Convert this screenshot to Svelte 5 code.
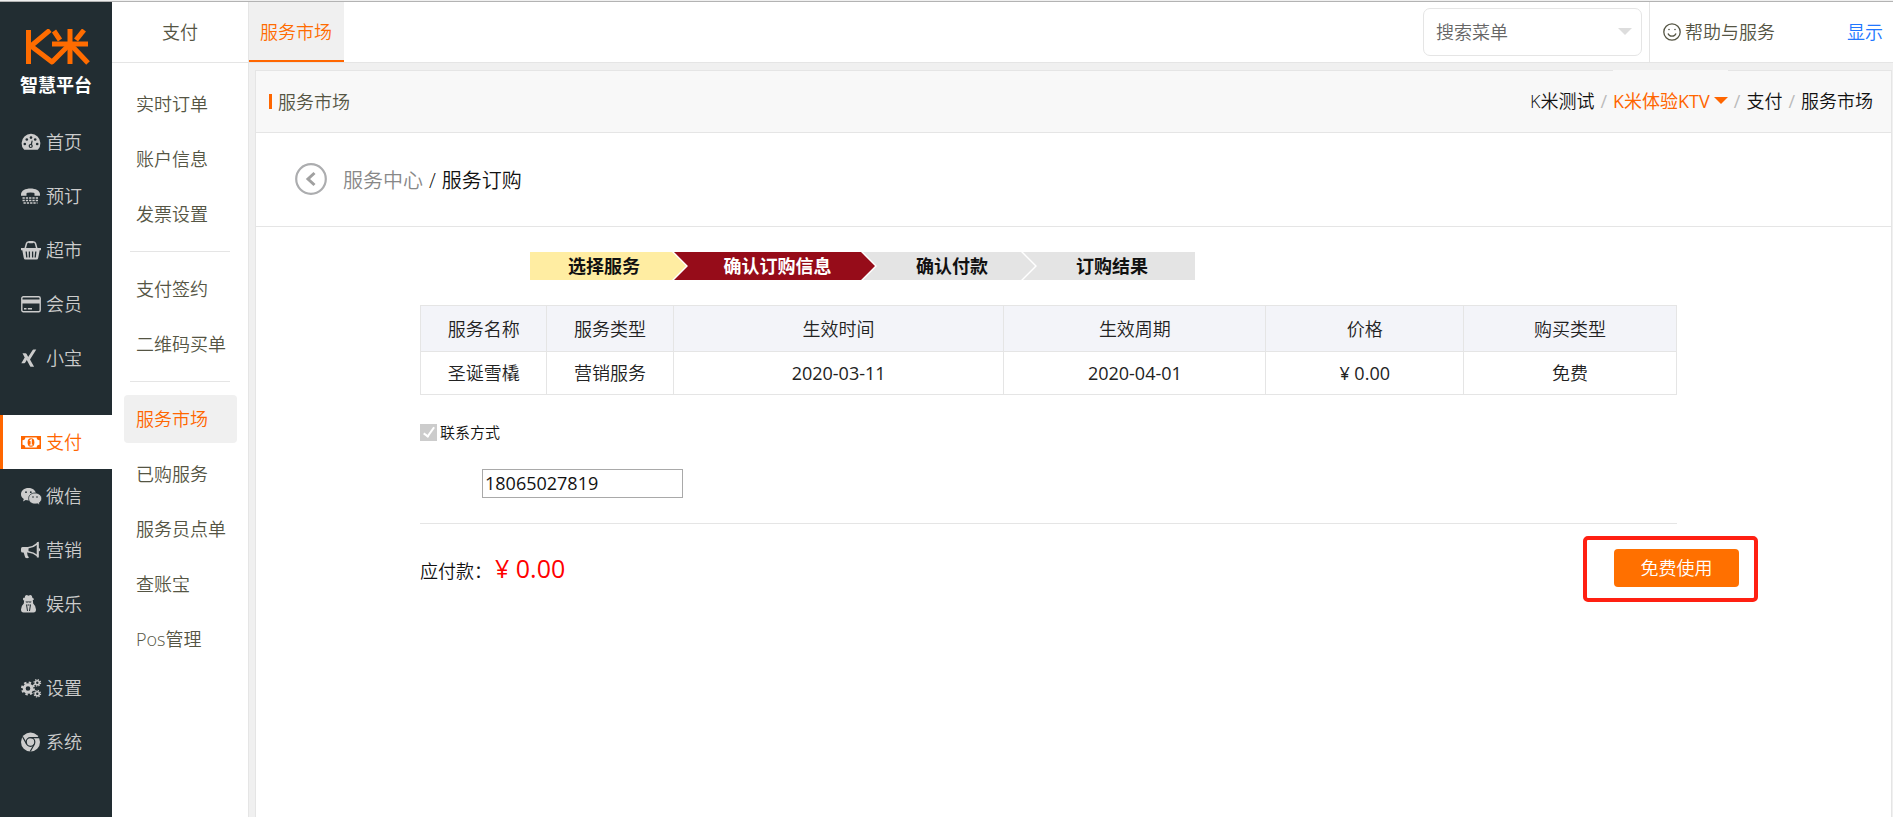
<script>
  const DARK = '#222d32';

  // 20x20 icons, drawn in the colour of the menu text
  const ICONS = {
    home: `<path d="M3 17.5A9.4 9.4 0 1 1 17 17.5Q16.600 17.800 16 17.800H4Q3.400 17.800 3 17.500Z"/>
      <g fill="${DARK}"><circle cx="3.800" cy="12" r="1.300"/><circle cx="5.800" cy="7.500" r="1.300"/><circle cx="10" cy="5.600" r="1.300"/><circle cx="14.200" cy="7.500" r="1.300"/><circle cx="16.200" cy="12" r="1.300"/><circle cx="9.700" cy="14" r="2.100"/><path d="M9.300 13.500L10.700 8.400L11.700 8.700L10.700 14Z"/></g>
      <circle cx="9.700" cy="14" r="0.900"/>`,
    phone: `<path d="M0 8.500C0 4.500 4.500 2.500 9.500 2.500S19 4.500 19 8.500V9.800H13.500V7.500Q13.500 6.500 9.500 6.500T5.500 7.500V9.800H0Z"/>
      <path d="M1.500 12H18M1.500 14.500H18M2.500 17H16.500" stroke="currentColor" stroke-width="1.700" stroke-dasharray="2.300 1" fill="none"/>`,
    market: `<path d="M4 9L5.500 3.500Q6 2 7.500 2H12.500Q14 2 14.500 3.500L16 9" fill="none" stroke="currentColor" stroke-width="1.500"/><rect x="7.500" y="1" width="5" height="2.200" rx="1"/>
      <path d="M0 8H20V10.300H18.700L17.200 18Q17 19.500 15.500 19.500H4.500Q3 19.500 2.800 18L1.300 10.300H0Z"/>
      <path d="M5.200 11.500L5.800 17.500M8.400 11.500V17.500M11.600 11.500V17.500M14.800 11.500L14.200 17.500" stroke="${DARK}" stroke-width="1.300"/>`,
    card: `<rect x="0.800" y="2.800" width="18.400" height="14.900" rx="1.500" fill="none" stroke="currentColor" stroke-width="1.400"/><rect x="1" y="5.500" width="18" height="4"/>
      <path d="M3 14.800H5.500M6.800 14.800H11" stroke="currentColor" stroke-width="1.500"/>`,
    xing: `<path d="M1.500 5.200H4.500Q5.200 5.200 5.600 6L7.400 9.200L4.300 14.600Q3.900 15.300 3.200 15.300H0.300L3.700 9.400Z"/><path d="M15.300 1.500L9 11.500L13.100 18.800H10Q9.500 18.800 9.100 18.200L5.500 11.500L11.500 2.200Q11.900 1.500 12.500 1.500Z"/>`,
    pay: `<rect x="0" y="4" width="20" height="13"/><path d="M4.300 5.500H15.700Q15.700 8.200 18.500 8.200V12.800Q15.700 12.800 15.700 15.500H4.300Q4.300 12.800 1.500 12.800V8.200Q4.300 8.200 4.300 5.500Z" fill="#fff"/>
      <ellipse cx="10" cy="10.500" rx="3.400" ry="4.200"/><path d="M8.700 8.800L10.200 7.800V12.700M8.600 13H11.600" fill="none" stroke="#fff" stroke-width="1.200"/>`,
    wechat: `<path d="M7.500 2C3.200 2 0 4.700 0 8.200C0 10.200 1 11.900 2.800 13L2 15.400L4.700 14.100Q6 14.500 7.600 14.500C12 14.500 15 11.800 15 8.200S11.900 2 7.500 2Z"/>
      <path d="M14 7C10.200 7 7.600 9.400 7.600 12.500S10.400 18 14 18Q15.200 18 16.300 17.700L18.800 19L18.200 16.900C19.800 15.800 20.700 14.300 20.700 12.500C20.700 9.400 17.700 7 14 7Z" stroke="${DARK}" stroke-width="0.800"/>
      <g fill="${DARK}"><circle cx="5" cy="6.200" r="0.900"/><circle cx="9.800" cy="6.200" r="0.900"/><circle cx="12" cy="11" r="0.800"/><circle cx="16" cy="11" r="0.800"/></g>`,
    horn: `<path d="M1.500 7H7.500V12.500H1.500Q0 12.500 0 11V8.500Q0 7 1.500 7Z"/><path d="M2.500 12H6L6.600 15.500L8 17.600Q6 18.800 4.200 17.600Z"/>
      <path d="M7 7.800Q12.500 7 16.700 3.300V15.800Q12.500 12.500 7 11.800" fill="none" stroke="currentColor" stroke-width="1.600"/><rect x="15.800" y="2" width="1.900" height="15.500" rx="0.600"/><path d="M17.500 7.800Q19.200 8.200 19.200 9.700T17.500 11.600Z"/>`,
    spy: `<path d="M3.500 4Q3.900 1 5.500 1Q6.300 1 7.500 1.700Q8.700 1 9.500 1Q11.100 1 11.500 4Q13 4.400 13 5.200T7.500 6.600T2 5.200T3.500 4Z"/>
      <path d="M3.200 6H11.800L12.200 9.500Q15 12 15 15.500Q15 18.500 12.500 18.500H2.500Q0 18.500 0 15.500Q0 12 2.800 9.500Z"/>
      <path d="M4.500 7.400H10.500L10 8.600H8L7.500 8.100L7 8.600H5Z" fill="${DARK}"/><path d="M5.500 10.500L6.500 17M9.500 10.500L8.500 17M6.500 11H8.500" stroke="${DARK}" stroke-width="1"/>`,
    gears: `<circle cx="7" cy="10.500" r="3.800" fill="none" stroke="currentColor" stroke-width="3"/><circle cx="7" cy="10.500" r="6" fill="none" stroke="currentColor" stroke-width="2" stroke-dasharray="2.400 2.312"/>
      <circle cx="16.300" cy="4.800" r="2" fill="none" stroke="currentColor" stroke-width="1.600"/><circle cx="16.300" cy="4.800" r="3.300" fill="none" stroke="currentColor" stroke-width="1.200" stroke-dasharray="1.300 1.290"/>
      <circle cx="16.300" cy="15.700" r="2" fill="none" stroke="currentColor" stroke-width="1.600"/><circle cx="16.300" cy="15.700" r="3.300" fill="none" stroke="currentColor" stroke-width="1.200" stroke-dasharray="1.300 1.290"/>`,
    chrome: `<circle cx="9.500" cy="10" r="9.500"/><circle cx="9.500" cy="10" r="4.300" fill="none" stroke="${DARK}" stroke-width="1.200"/>
      <path d="M9.500 5.700H18.200M13.300 12.200L9.200 19.500M5.700 12.100L1.700 5" stroke="${DARK}" stroke-width="1.200"/>`,
  };

  const mainMenu = [
    [
      { icon: 'home', label: '首页' },
      { icon: 'phone', label: '预订' },
      { icon: 'market', label: '超市' },
      { icon: 'card', label: '会员' },
      { icon: 'xing', label: '小宝' },
    ],
    [
      { icon: 'pay', label: '支付' },
      { icon: 'wechat', label: '微信' },
      { icon: 'horn', label: '营销' },
      { icon: 'spy', label: '娱乐' },
    ],
    [
      { icon: 'gears', label: '设置' },
      { icon: 'chrome', label: '系统' },
    ],
  ];

  const subMenu = [
    ['实时订单', '账户信息', '发票设置'],
    ['支付签约', '二维码买单'],
    ['服务市场', '已购服务', '服务员点单', '查账宝', 'Pos管理'],
  ];

  const steps = ['选择服务', '确认订购信息', '确认付款', '订购结果'];
  const currentStep = 1;

  const columns = ['服务名称', '服务类型', '生效时间', '生效周期', '价格', '购买类型'];
  const rows = [['圣诞雪橇', '营销服务', '2020-03-11', '2020-04-01', '¥ 0.00', '免费']];

  let activeMain = $state('支付');
  let activeSub = $state('服务市场');
  let phone = $state('18065027819');
  let search = $state('');
</script>

<div class="shell">
  <nav class="sidebar">
    <a class="logo" href="#home" aria-label="K米智慧平台">
      <svg viewBox="0 0 64 36" width="64" height="36" fill="none" stroke="#ff6c00" stroke-width="5" stroke-linejoin="round">
        <path d="M2.500 1V35" />
        <path d="M24 1L5 17L26 33L42 17" />
        <path d="M28 2L34 11" />
        <path d="M44 0V35" />
        <path d="M58 1L50 11" />
        <path d="M26 15H62" />
        <path d="M46 17L62 34" />
      </svg>
      <span>智慧平台</span>
    </a>
    {#each mainMenu as group}
      <ul>
        {#each group as item}
          <li>
            <a
              href="#{item.icon}"
              class:active={activeMain === item.label}
              onclick={() => (activeMain = item.label)}
            >
              <svg viewBox="0 0 20 20" width="20" height="20" fill="currentColor">{@html ICONS[item.icon]}</svg>
              {item.label}
            </a>
          </li>
        {/each}
      </ul>
    {/each}
  </nav>

  <nav class="submenu">
    <h2>支付</h2>
    {#each subMenu as group}
      <ul>
        {#each group as label}
          <li>
            <a href="#sub" class:active={activeSub === label} onclick={() => (activeSub = label)}>{label}</a>
          </li>
        {/each}
      </ul>
    {/each}
  </nav>

  <div class="main">
    <header class="topbar">
      <a class="tab" href="#market">服务市场</a>
      <div class="search">
        <select bind:value={search} aria-label="搜索菜单">
          <option value="">搜索菜单</option>
          {#each subMenu.flat() as label}
            <option value={label}>{label}</option>
          {/each}
        </select>
        <span class="caret"></span>
      </div>
      <div class="help">
        <a href="#help">
          <svg viewBox="0 0 18 18" width="18" height="18" fill="none" stroke="currentColor" stroke-width="1.3">
            <circle cx="9" cy="9" r="8.200" />
            <path d="M5 10.500Q6 13.200 9 13.200T13 10.500" />
            <circle cx="6" cy="6.500" r="0.800" fill="currentColor" stroke="none" />
            <circle cx="12" cy="6.500" r="0.800" fill="currentColor" stroke="none" />
          </svg>
          帮助与服务
        </a>
        <a class="show" href="#show">显示</a>
      </div>
    </header>

    <main class="panel">
      <div class="panel-head">
        <h1>服务市场</h1>
        <div class="crumbs">
          <a href="#company">K米测试</a>
          <i>/</i>
          <a class="shop" href="#shop">K米体验KTV<span class="caret"></span></a>
          <i>/</i>
          <a href="#pay">支付</a>
          <i>/</i>
          <span>服务市场</span>
        </div>
      </div>

      <div class="page-nav">
        <button class="back" aria-label="返回">
          <svg viewBox="0 0 32 32" width="32" height="32" fill="none" stroke="#acadaf">
            <circle cx="16" cy="16" r="14.800" stroke-width="2.200" />
            <path d="M19.500 10L13 16L19.500 22" stroke="#a0a0a0" stroke-width="3" />
          </svg>
        </button>
        <p><a href="#center">服务中心</a><span>/</span>服务订购</p>
      </div>

      <div class="order">
        <ol class="steps">
          {#each steps as step, i}
            <li class:done={i < currentStep} class:current={i === currentStep}>{step}</li>
          {/each}
        </ol>

        <table>
          <thead>
            <tr>
              {#each columns as col}
                <th>{col}</th>
              {/each}
            </tr>
          </thead>
          <tbody>
            {#each rows as row}
              <tr>
                {#each row as cell}
                  <td class:num={/\d/.test(cell)}>{cell}</td>
                {/each}
              </tr>
            {/each}
          </tbody>
        </table>

        <label class="contact">
          <input type="checkbox" checked disabled />
          联系方式
        </label>
        <input class="phone" type="text" bind:value={phone} aria-label="联系方式" />
      </div>

      <div class="checkout">
        <p>应付款：<strong>¥ 0.00</strong></p>
        <div class="mark">
          <button>免费使用</button>
        </div>
      </div>
    </main>
  </div>
</div>

<style>
  :global(body) {
    padding-top: 1px;
    background: #f0f0f0;
  }

  .shell {
    display: flex;
    box-sizing: border-box;
    min-height: calc(100vh - 1px);
    border-top: 1px solid #b3b3b3;
    font: 350 18px/24px "Open Sans", "Noto Sans CJK SC", sans-serif;
    color: #111;
  }

  a { color: inherit; text-decoration: none; }
  ul, ol { list-style: none; margin: 0; padding: 0; }
  h1, h2, p { margin: 0; font-size: 18px; font-weight: 350; }
  button, input, select { font: inherit; color: inherit; }

  /* dark sidebar */
  .sidebar {
    width: 112px;
    flex-shrink: 0;
    background: #222d32;
    color: #ccc;
  }
  .logo {
    display: flex;
    flex-direction: column;
    align-items: center;
    gap: 8px;
    height: 86px;
    padding-top: 27px;
    color: #fff;
    font-weight: 700;
  }
  .logo svg { margin-left: 4px; }
  .sidebar ul + ul { margin-top: 30px; }
  .sidebar li a {
    display: flex;
    align-items: center;
    gap: 5px;
    height: 54px;
    padding-left: 18px;
    border-left: 3px solid transparent;
  }
  .sidebar li svg { overflow: visible; }
  .sidebar li a.active {
    background: #fff;
    border-color: #f60;
    color: #f60;
  }

  /* second level */
  .submenu {
    width: 136px;
    flex-shrink: 0;
    background: #fff;
    border-right: 1px solid #e5e5e5;
    color: #554;
  }
  .submenu h2 {
    height: 60px;
    line-height: 60px;
    border-bottom: 1px solid #e5e5e5;
    margin-bottom: 17px;
    text-align: center;
  }
  .submenu ul {
    display: flex;
    flex-direction: column;
    gap: 7px;
    margin: 0 11px 0 12px;
  }
  .submenu ul + ul::before {
    content: '';
    height: 1px;
    margin: 13px 7px 6px 6px;
    background: #e5e5e5;
  }
  .submenu li a {
    display: block;
    padding: 12px 0 12px 12px;
    border-radius: 4px;
    white-space: nowrap;
  }
  .submenu li a.active { background: #f0f0f0; color: #f60; }

  /* top bar */
  .main {
    flex: 1;
    display: flex;
    flex-direction: column;
    min-width: 0;
  }
  .topbar {
    display: flex;
    align-items: center;
    height: 60px;
    background: #fff;
    border-bottom: 1px solid #e5e5e5;
  }
  .tab {
    box-sizing: border-box;
    height: 60px;
    padding: 0 12px 0 11px;
    line-height: 60px;
    background: #f0f0f0;
    border-bottom: 2px solid #f60;
    color: #ff6c00;
  }
  .search {
    position: relative;
    margin: 0 7px 0 auto;
  }
  .search select {
    appearance: none;
    width: 219px;
    height: 48px;
    padding: 0 36px 0 12px;
    background: #fff;
    border: 1px solid #e5e5e5;
    border-radius: 7px;
    color: #666;
  }
  .caret {
    border: 7px solid transparent;
    border-top: 7px solid;
    border-bottom: 0;
  }
  .search .caret {
    position: absolute;
    top: 20px;
    right: 10px;
    color: #ddd;
  }
  .help {
    display: flex;
    align-items: center;
    justify-content: space-between;
    width: 220px;
    height: 60px;
    padding: 0 10px 0 13px;
    border-left: 1px solid #e5e5e5;
    color: #554;
  }
  .help a { display: flex; align-items: center; gap: 4px; }
  .help .show { color: #2277ff; }

  /* content panel */
  .panel {
    flex: 1;
    margin: 7px 1px 0 6px;
    background: #fff;
    border: 1px solid #e5e5e5;
    border-bottom: 0;
  }
  .panel-head {
    display: flex;
    align-items: center;
    justify-content: space-between;
    height: 61px;
    padding: 0 18px 0 13px;
    background: #f8f8f8;
    border-bottom: 1px solid #e5e5e5;
  }
  .panel-head h1 {
    display: flex;
    align-items: center;
    gap: 6px;
    color: #554;
  }
  .panel-head h1::before {
    content: '';
    width: 3px;
    height: 15px;
    background: #f60;
  }
  .crumbs {
    display: flex;
    align-items: center;
    gap: 6px;
    margin-top: -2px;
  }
  .crumbs i { color: #bbb; font-style: normal; font-weight: 400; }
  .crumbs .shop {
    display: flex;
    align-items: center;
    gap: 4px;
    height: 61px;
    background: #f8f8f8;
    color: #f60;
    font-weight: 400;
  }
  .page-nav {
    display: flex;
    align-items: center;
    gap: 16px;
    height: 93px;
    padding-left: 39px;
    border-bottom: 1px solid #e5e5e5;
  }
  .page-nav p { padding-top: 2px; font-size: 20px; }
  .page-nav p a { color: #888; }
  .page-nav p span { padding: 0 6px; }
  .back {
    display: flex;
    padding: 0 0 2px;
    border: 0;
    background: none;
    cursor: pointer;
  }

  .order {
    margin: 0 214px 0 164px;
    padding: 25px 0;
    border-bottom: 1px solid #e5e5e5;
  }
  .steps {
    display: flex;
    width: 665px;
    margin: 0 0 25px 110px;
    line-height: 28px;
    font-weight: 700;
    text-align: center;
    text-indent: 6px;
  }
  .steps li {
    flex: 0 0 172px;
    background: #e4e4e4;
    clip-path: polygon(0 0, calc(100% - 14px) 0, 100% 50%, calc(100% - 14px) 100%, 0 100%, 14px 50%);
  }
  .steps li + li { margin-left: -12px; }
  .steps li.done {
    flex-basis: 156px;
    text-indent: -8px;
    background: #ffeda2;
    clip-path: polygon(0 0, calc(100% - 14px) 0, 100% 50%, calc(100% - 14px) 100%, 0 100%);
  }
  .steps li.current {
    flex-basis: 201px;
    background: #960c19;
    color: #fff;
  }
  .steps li:last-child {
    flex: 1;
    clip-path: polygon(0 0, 100% 0, 100% 100%, 0 100%, 14px 50%);
  }

  table {
    width: 100%;
    table-layout: fixed;
    border-collapse: collapse;
    text-align: center;
    color: #222;
  }
  th, td {
    padding: 0;
    border: 1px solid #e5e5e5;
    font-weight: 350;
  }
  th { height: 45px; background: #f3f4f9; }
  td { height: 42px; }
  th:nth-child(-n + 2) { width: 10%; }
  th:nth-child(3) { width: 26.3%; }
  th:nth-child(4) { width: 20.8%; }
  th:nth-child(5) { width: 15.7%; }
  th:nth-child(6) { width: 16.9%; }
  td.num { font-weight: 400; }

  .contact {
    display: flex;
    align-items: center;
    gap: 3px;
    width: max-content;
    margin-top: 25px;
    font-size: 15px;
  }
  .contact input {
    appearance: none;
    display: flex;
    justify-content: center;
    width: 17px;
    height: 17px;
    margin: 0;
    background: #ccc;
  }
  .contact input:checked::after {
    content: '';
    width: 4px;
    height: 10px;
    margin-top: 1px;
    border: solid #fff;
    border-width: 0 2px 2px 0;
    transform: rotate(35deg);
  }
  .phone {
    display: block;
    box-sizing: border-box;
    width: 201px;
    height: 29px;
    margin: 25px 0 0 62px;
    padding: 0 2px 2px;
    border: 1px solid #a9a9a9;
    font-weight: 400;
  }

  .checkout {
    display: flex;
    align-items: center;
    justify-content: space-between;
    margin: 12px 133px 0 164px;
  }
  .checkout strong {
    margin-left: 3px;
    font-size: 25px;
    font-weight: 400;
    color: #f00;
  }
  .mark {
    padding: 9px 15px 11px 27px;
    border: 4px solid #ff2012;
    border-radius: 5px;
  }
  .mark button {
    display: block;
    width: 125px;
    height: 38px;
    padding: 0;
    border: 0;
    border-radius: 4px;
    background: #ff7000;
    color: #fff;
    cursor: pointer;
  }
</style>
